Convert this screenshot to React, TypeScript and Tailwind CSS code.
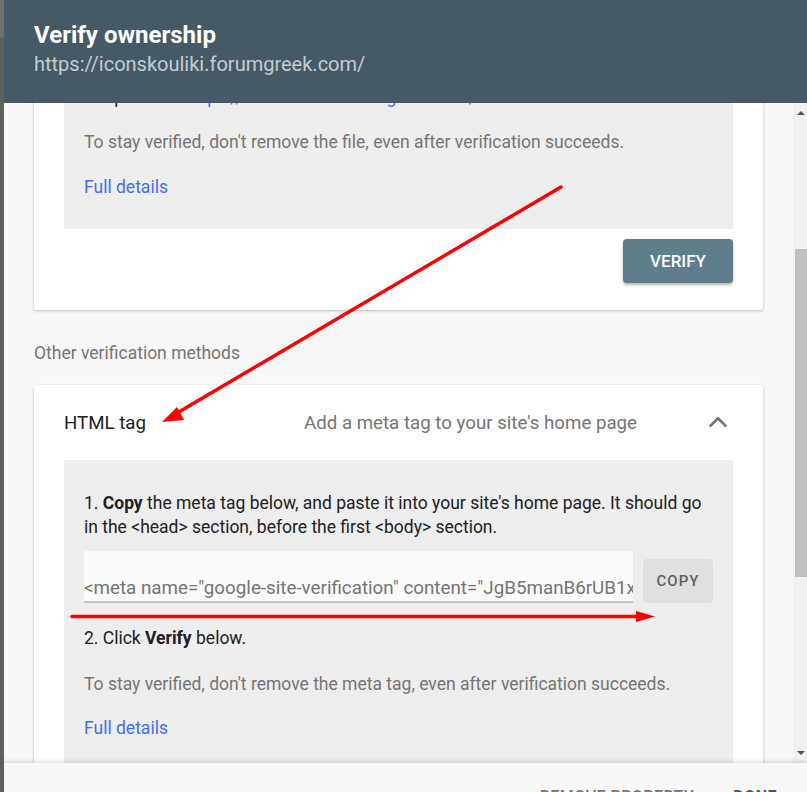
import { ChevronUp } from "lucide-react";

const font = { fontFamily: "Roboto, 'Liberation Sans', sans-serif" };

function Arrows() {
  // red annotation arrows drawn over the dialog
  return (
    <svg
      className="pointer-events-none absolute left-0 top-0"
      width="807"
      height="792"
      viewBox="0 0 807 792"
    >
      <line x1="561" y1="187" x2="172" y2="416" stroke="#ff0000" strokeWidth="3.4" strokeLinecap="round" />
      <polygon points="162,422 177,407 184,420" fill="#ff0000" />
      <line x1="72" y1="616.5" x2="640" y2="616.5" stroke="#ff0000" strokeWidth="3.6" strokeLinecap="round" />
      <polygon points="655,616.5 636,611 636,622" fill="#ff0000" />
    </svg>
  );
}

function Scrollbar() {
  return (
    <div className="flex w-[14px] shrink-0 flex-col bg-[#f1f1f1] pl-[2px]">
      <div className="flex h-[20px] items-center justify-center">
        <div className="h-0 w-0 border-x-[4px] border-b-[4px] border-x-transparent border-b-[#505050]" />
      </div>
      <div className="h-[126px]" />
      <div className="h-[328px] bg-[#c1c1c1]" />
      <div className="flex-1" />
      <div className="flex h-[20px] items-center justify-center">
        <div className="h-0 w-0 border-x-[4px] border-t-[4px] border-x-transparent border-t-[#505050]" />
      </div>
    </div>
  );
}

export default function App() {
  return (
    <div className="relative flex h-[792px] w-[807px] overflow-hidden bg-[#5c6162]" style={font}>
      {/* backdrop strip */}
      <div className="flex w-[4px] shrink-0 flex-col">
        <div className="h-[37px] bg-[#6f7071]" />
        <div className="flex-1 bg-[#5c6162]" />
      </div>

      <div className="flex min-w-0 flex-1 flex-col">
        {/* Header */}
        <header className="flex h-[103px] shrink-0 flex-col bg-[#465a65] pl-[30px] pt-[20px]">
          <h1 className="text-[24px] font-bold leading-[30px] text-white">Verify ownership</h1>
          <p className="text-[20px] leading-[28px] text-white/70">https://iconskouliki.forumgreek.com/</p>
        </header>

        <div className="flex min-h-0 flex-1">
          <main className="min-w-0 flex-1 overflow-hidden bg-[#f8f8f8] pl-[30px] pr-[30px]">
            {/* HTML file card (scrolled) */}
            <section className="-mt-[69px] rounded-[2px] bg-white px-[30px] pb-[27px] pt-[30px] shadow-[0_1px_3px_rgba(0,0,0,0.25)]">
              <div className="bg-[#eeeeee] px-5 pb-[30px] pt-[21px] text-[17.5px] leading-[24px]">
                <p className="text-[#212121]">
                  2. Upload to: <span className="text-[#3f6ff5]">https://iconskouliki.forumgreek.com/</span>
                </p>
                <p className="mt-[21px] text-[#757575]">
                  To stay verified, don't remove the file, even after verification succeeds.
                </p>
                <p className="mt-[21px] text-[#3f6ff5]">Full details</p>
              </div>
              <div className="mt-[10px] flex justify-end">
                <button className="h-[44px] w-[110px] rounded-[4px] bg-[#607d8b] pt-[2px] text-[17px] font-medium text-white shadow-[0_2px_3px_rgba(0,0,0,0.3)]">
                  VERIFY
                </button>
              </div>
            </section>

            <p className="mb-[20px] mt-[31px] text-[17.5px] leading-[24px] text-[#757575]">
              Other verification methods
            </p>

            {/* HTML tag card */}
            <section className="rounded-[2px] bg-white shadow-[0_1px_3px_rgba(0,0,0,0.25)]">
              <div className="flex h-[75px] items-center pl-[30px] pr-[30px] pt-[2px]">
                <span className="w-[240px] text-[18.7px] text-[#212121]">HTML tag</span>
                <span className="flex-1 text-[18.7px] text-[#757575]">Add a meta tag to your site's home page</span>
                <ChevronUp size={30} strokeWidth={2} className="-mt-[3px] text-[#757575]" />
              </div>
              <div className="mx-[30px] bg-[#eeeeee] px-5 pb-[40px] pt-[31px] text-[17.5px] leading-[24px]">
                <p className="text-[#212121]">
                  1. <b className="font-bold">Copy</b> the meta tag below, and paste it into your site's home page. It should go
                  in the &lt;head&gt; section, before the first &lt;body&gt; section.
                </p>
                <div className="mt-3 flex items-start gap-[10px]">
                  <div className="h-[52px] min-w-0 flex-1 overflow-hidden whitespace-nowrap border-b-2 border-[#c4c4c4] bg-[#fafafa] pt-[25px] text-[18.8px] leading-[24px] text-[#757575]">
                    &lt;meta name="google-site-verification" content="JgB5manB6rUB1x" /&gt;
                  </div>
                  <button className="mt-2 h-[44px] w-[70px] shrink-0 rounded-[4px] bg-[#e0e0e0] text-[15px] font-medium tracking-[1px] text-[#616161]">
                    COPY
                  </button>
                </div>
                <p className="mt-[23px] text-[#212121]">
                  2. Click <b className="font-bold">Verify</b> below.
                </p>
                <p className="mt-[22px] text-[#757575]">
                  To stay verified, don't remove the meta tag, even after verification succeeds.
                </p>
                <p className="mt-[20px] text-[#3f6ff5]">Full details</p>
              </div>
            </section>
          </main>
          <Scrollbar />
        </div>

        {/* Footer */}
        <footer className="relative flex h-[29px] shrink-0 justify-end gap-[39px] overflow-hidden bg-[#f8f8f8] pr-[30px] pt-[24px] shadow-[0_-2px_4px_rgba(0,0,0,0.12)]">
          <span className="text-[16px] font-medium leading-[20px] tracking-[0.5px] text-[#757575]">REMOVE PROPERTY</span>
          <span className="text-[16px] font-bold leading-[20px] tracking-[0.5px] text-[#455a64]">DONE</span>
        </footer>
      </div>

      <Arrows />
    </div>
  );
}
